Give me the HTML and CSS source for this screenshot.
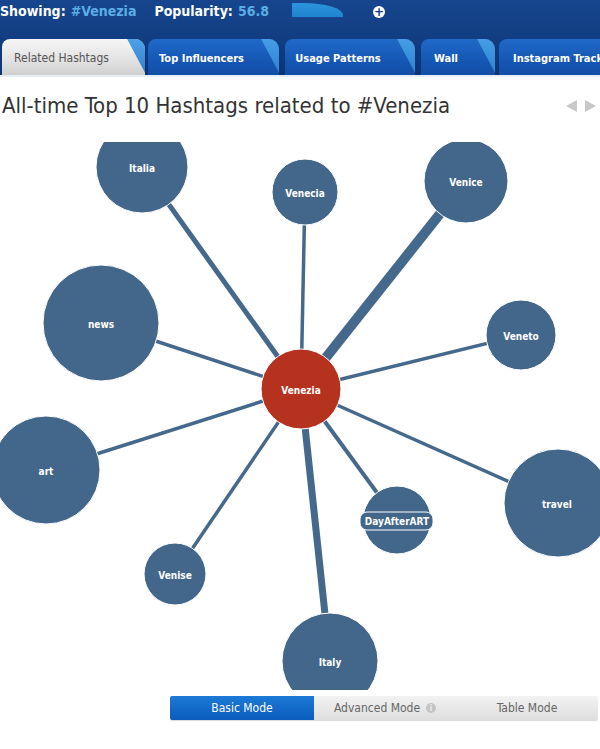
FILE: index.html
```html
<!DOCTYPE html>
<html>
<head>
<meta charset="utf-8">
<link rel="stylesheet" href="styles.css">
</head>
<body>
<div class="header">
  <div class="status">
    <span class="label">Showing:</span> <span class="value">#Venezia</span>
    <span class="label pop">Popularity:</span> <span class="value">56.8</span>
    <span class="gauge"></span>
    <span class="plus">+</span>
  </div>
  <div class="tabs">
    <div class="tab active t1">Related Hashtags</div>
    <div class="tab t2">Top Influencers</div>
    <div class="tab t3">Usage Patterns</div>
    <div class="tab t4">Wall</div>
    <div class="tab t5">Instagram Tracking</div>
  </div>
</div>
<div class="rule"></div>
<div class="titlebar">
  <h1 class="title">All-time Top 10 Hashtags related to #Venezia</h1>
  <div class="arrows"><span class="arr left"></span><span class="arr right"></span></div>
</div>
<svg class="graph" width="600" height="548" viewBox="0 142 600 548">
  <g class="edges">
    <line x1="301" y1="389" x2="142" y2="167" stroke-width="5"/>
    <line x1="301" y1="389" x2="305" y2="192" stroke-width="3.5"/>
    <line x1="301" y1="389" x2="466" y2="181" stroke-width="10"/>
    <line x1="301" y1="389" x2="101" y2="323" stroke-width="3.5"/>
    <line x1="301" y1="389" x2="521" y2="335" stroke-width="3.5"/>
    <line x1="301" y1="389" x2="46" y2="470" stroke-width="3.5"/>
    <line x1="301" y1="389" x2="557" y2="503" stroke-width="3.5"/>
    <line x1="301" y1="389" x2="397" y2="520" stroke-width="4"/>
    <line x1="301" y1="389" x2="175" y2="574" stroke-width="3.5"/>
    <line x1="301" y1="389" x2="330" y2="661" stroke-width="7"/>
  </g>
  <g class="nodes">
    <circle cx="142" cy="167" r="46"/>
    <circle cx="305" cy="192" r="33"/>
    <circle cx="466" cy="181" r="42"/>
    <circle cx="101" cy="323" r="58"/>
    <circle cx="521" cy="335" r="35"/>
    <circle cx="46" cy="470" r="54"/>
    <circle cx="558" cy="503" r="54"/>
    <circle cx="397" cy="520" r="34"/>
    <circle cx="175" cy="574" r="31"/>
    <circle cx="330" cy="661" r="48"/>
    <circle class="center" cx="301" cy="389" r="40"/>
  </g>
  <g class="labels">
    <text x="142" y="172">Italia</text>
    <text x="305" y="197">Venecia</text>
    <text x="466" y="186">Venice</text>
    <text x="101" y="328">news</text>
    <text x="521" y="340">Veneto</text>
    <text x="46" y="475">art</text>
    <text x="557" y="508">travel</text>
    <rect class="lblbg" x="360" y="512" width="73" height="18" rx="7"/>
    <text x="397" y="525">DayAfterART</text>
    <text x="175" y="579">Venise</text>
    <text x="330" y="666">Italy</text>
    <text x="301" y="394">Venezia</text>
  </g>
</svg>
<div class="modes">
  <div class="mode basic">Basic Mode</div>
  <div class="mode adv">Advanced Mode <span class="info">i</span></div>
  <div class="mode table">Table Mode</div>
</div>
</body>
</html>
```
FILE: styles.css
```css
html, body {
  margin: 0;
  padding: 0;
  background: #ffffff;
  width: 600px;
  height: 749px;
  overflow: hidden;
  font-family: "DejaVu Sans Condensed", "DejaVu Sans", sans-serif;
}
.header {
  height: 75px;
  background: linear-gradient(180deg, #17468e 0%, #123d82 50%, #0d3373 100%);
  overflow: hidden;
}
.status {
  height: 21px;
  display: flex;
  align-items: center;
  padding-left: 0;
  font-size: 14px;
  font-weight: bold;
  white-space: nowrap;
}
.status .label { color: #ffffff; margin-right: 5px; }
.status .value { color: #5aaee6; }
.status .pop { margin-left: 18px; }
.gauge {
  display: inline-block;
  width: 51px;
  height: 14px;
  margin-left: 23px;
  margin-top: -2px;
  background: linear-gradient(180deg, #2b93dc, #1f84d0);
  border-top-right-radius: 40px 12px;
}
.plus {
  display: inline-flex;
  align-items: center;
  justify-content: center;
  width: 12px;
  height: 12px;
  border-radius: 50%;
  background: #ffffff;
  color: #123d82;
  font-size: 12px;
  line-height: 12px;
  font-weight: bold;
  margin-left: 30px;
  margin-top: 2px;
  font-family: "DejaVu Sans", sans-serif;
}
.tabs {
  display: flex;
  margin-top: 18px;
  height: 36px;
  align-items: flex-end;
}
.tab {
  position: relative;
  height: 36px;
  box-sizing: border-box;
  padding-right: 24px;
  padding-top: 2px;
  display: flex;
  align-items: center;
  justify-content: center;
  font-size: 11px;
  font-weight: bold;
  color: #ffffff;
  background: linear-gradient(180deg, #2069c8 0%, #1657b4 60%, #124ea6 100%);
  border-radius: 8px 10px 0 0;
  overflow: hidden;
  white-space: nowrap;
  flex-shrink: 0;
}
.tab::after {
  content: "";
  position: absolute;
  top: -2px;
  right: 4px;
  width: 15px;
  height: 40px;
  background: linear-gradient(180deg, #4aa4ea, #2f86d6);
  transform: skewX(28deg);
  transform-origin: top left;
  opacity: 0.9;
}
.tab.active {
  color: #555555;
  font-weight: normal;
  font-size: 12px;
  background: linear-gradient(180deg, #f6f6f6 0%, #e2e2e2 60%, #cfcfcf 100%);
}
.tab.active::after {
  background: linear-gradient(180deg, #3d9ae6, #1d6fc8);
}
.t1 { width: 143px; margin-left: 2px; }
.t2 { width: 131px; margin-left: 3px; }
.t3 { width: 130px; margin-left: 6px; }
.t4 { width: 74px; margin-left: 6px; }
.t5 { width: 140px; margin-left: 4px; justify-content: flex-start; padding-left: 14px; }
.t5::after { display: none; }
.rule {
  height: 2px;
  background: #e6eef5;
}
.titlebar {
  display: flex;
  align-items: center;
  justify-content: space-between;
  height: 65px;
  padding: 0 4px 9px 2px;
  box-sizing: border-box;
}
.title {
  margin: 0;
  font-weight: normal;
  font-size: 22px;
  color: #333333;
  white-space: nowrap;
}
.arrows {
  display: flex;
  gap: 8px;
  margin-top: 2px;
}
.arr {
  width: 0;
  height: 0;
  border-top: 6px solid transparent;
  border-bottom: 6px solid transparent;
}
.arr.left { border-right: 11px solid #c8c8c8; }
.arr.right { border-left: 11px solid #c8c8c8; }
.graph {
  display: block;
  overflow: hidden;
}
.edges line {
  stroke: #45698c;
}
.nodes circle {
  fill: #43678a;
  stroke: #ffffff;
  stroke-width: 1;
}
.nodes circle.center {
  fill: #b5321e;
}
.labels text {
  fill: #ffffff;
  font-family: "DejaVu Sans Condensed", "DejaVu Sans", sans-serif;
  font-weight: bold;
  font-size: 10px;
  text-anchor: middle;
}
.labels .lblbg {
  fill: #43678a;
  stroke: #ffffff;
  stroke-width: 1;
}
.modes {
  display: flex;
  margin-left: 170px;
  margin-top: 6px;
  width: 428px;
  height: 24px;
  border-radius: 2px;
  overflow: hidden;
  box-shadow: 0 1px 1px rgba(0,0,0,0.15);
}
.mode {
  display: flex;
  align-items: center;
  justify-content: center;
  font-size: 12px;
  color: #666666;
  background: linear-gradient(180deg, #f2f2f2 0%, #dedede 100%);
}
.mode.basic {
  width: 144px;
  color: #ffffff;
  background: linear-gradient(180deg, #1d7ad6 0%, #0b5cbc 100%);
}
.mode.adv { width: 142px; }
.mode.table { width: 142px; }
.info {
  display: inline-flex;
  align-items: center;
  justify-content: center;
  width: 10px;
  height: 10px;
  border-radius: 50%;
  background: #c4c4c4;
  color: #eeeeee;
  font-size: 8px;
  font-weight: bold;
  margin-left: 6px;
}
```
